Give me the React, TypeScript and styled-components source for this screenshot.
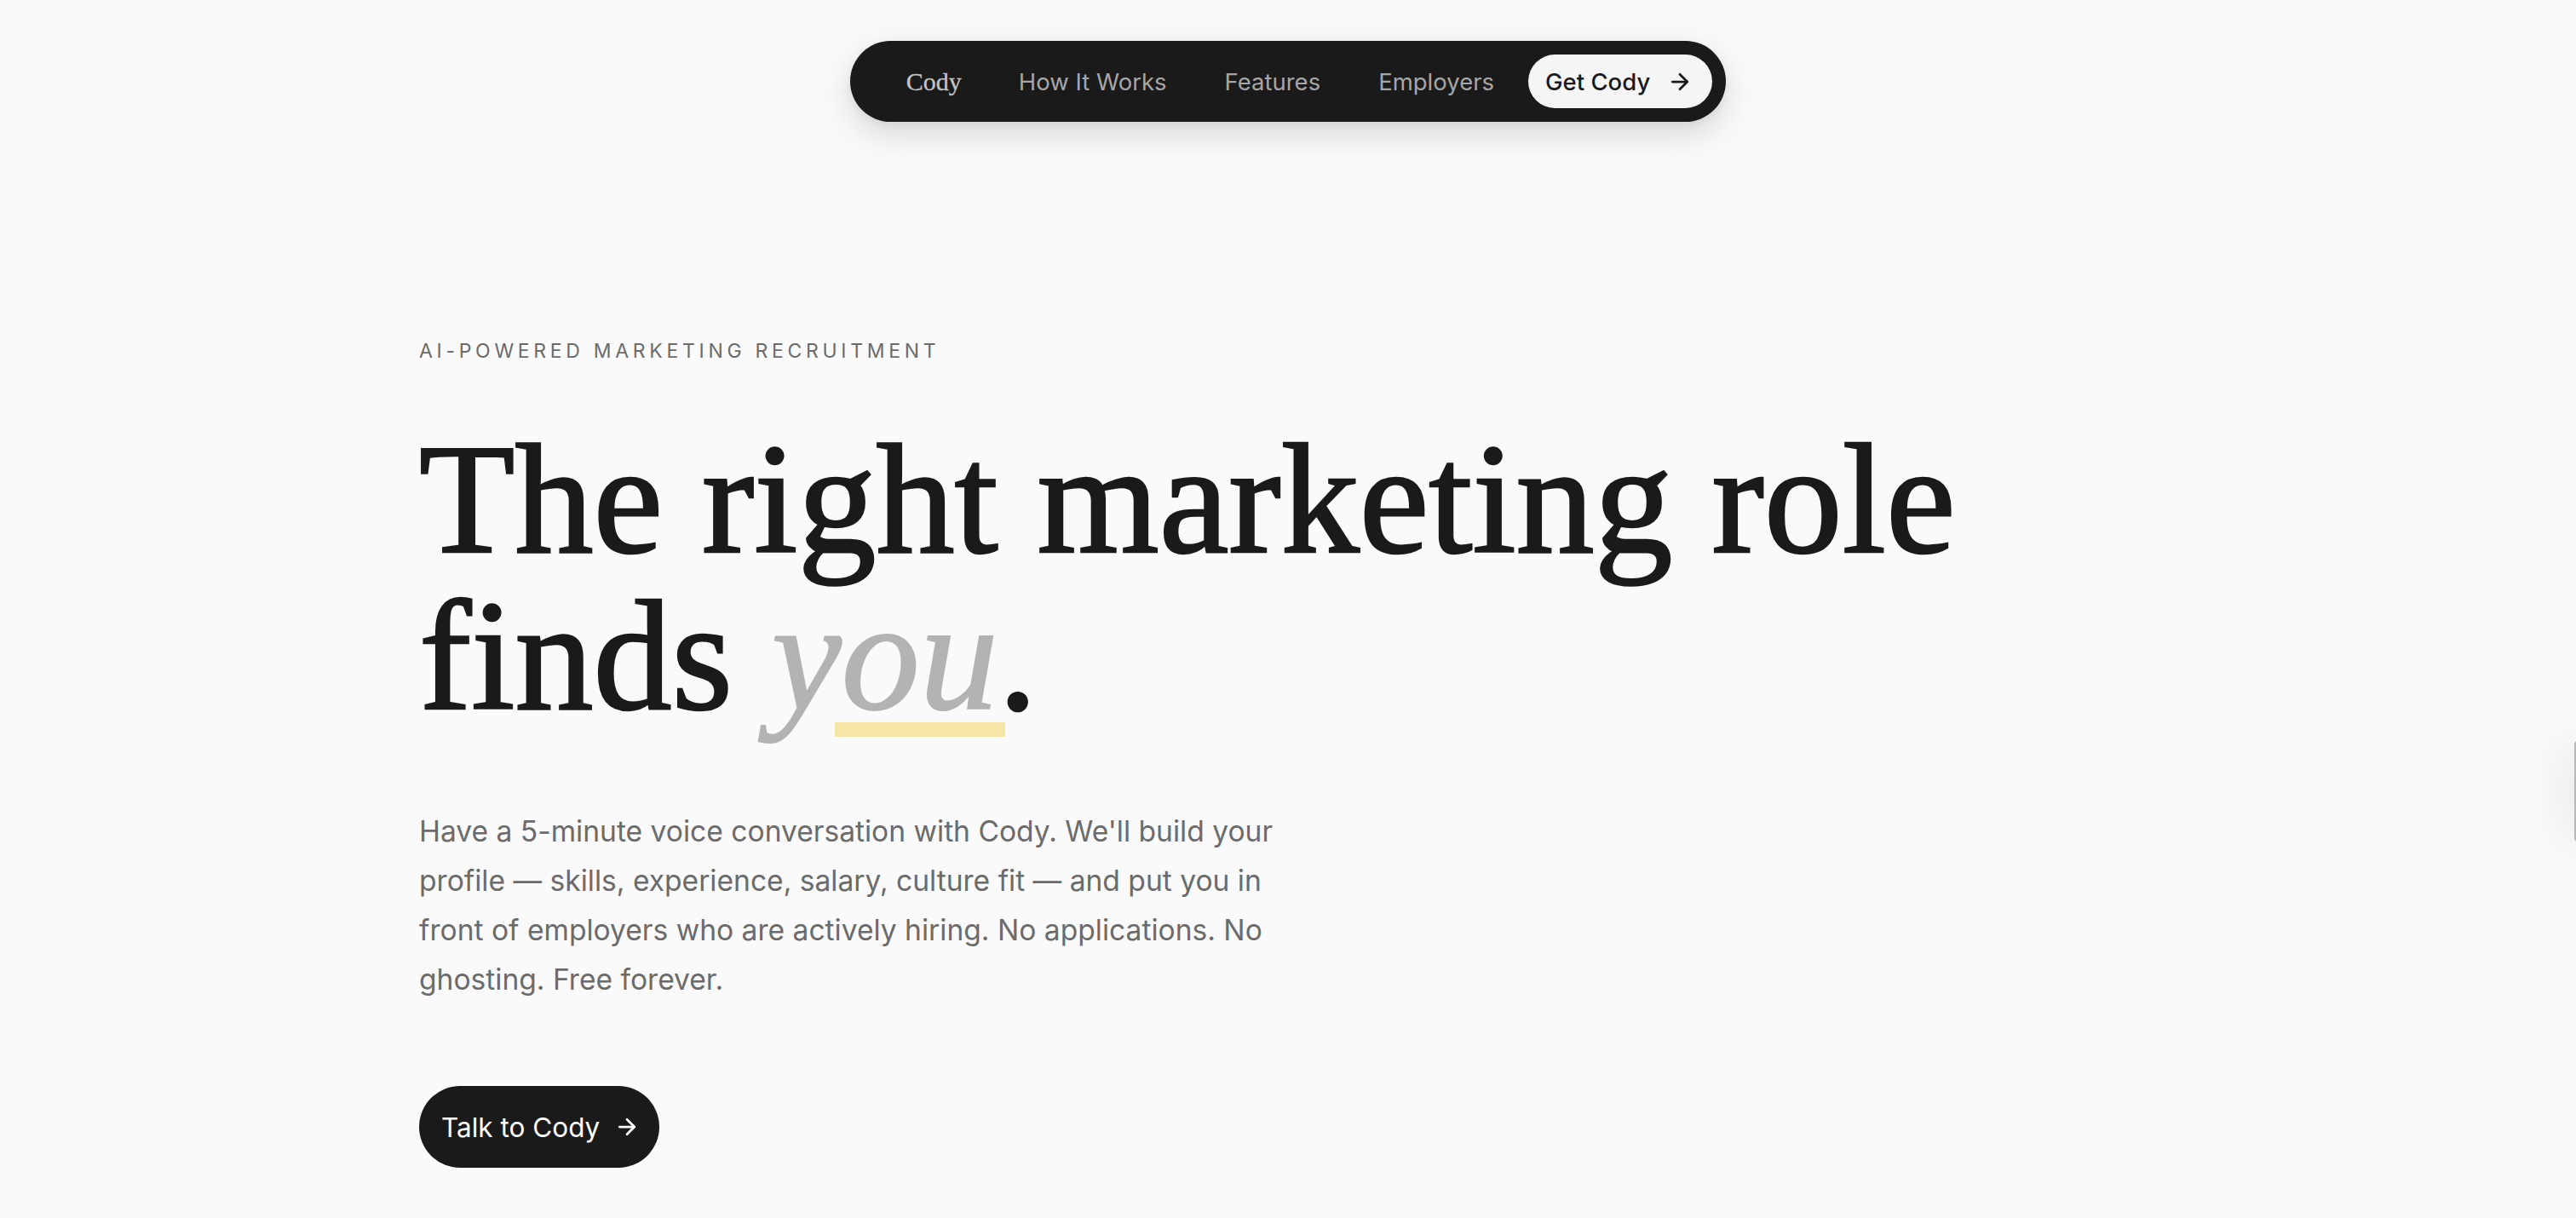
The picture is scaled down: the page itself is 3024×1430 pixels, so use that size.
import React from 'react';
import styled, { createGlobalStyle } from 'styled-components';
import { ArrowRight } from 'lucide-react';

const GlobalStyle = createGlobalStyle`
  html, body {
    margin: 0;
    padding: 0;
    background: #fafafa;
  }
  body {
    font-family: Inter, "Noto Sans", sans-serif;
    color: #1a1a1a;
    -webkit-font-smoothing: antialiased;
  }
  * {
    box-sizing: border-box;
  }
`;

function App() {
  return (
    <Page>
      <GlobalStyle />
      <NavRow>
        <NavPill>
          <Logo href="#">Cody</Logo>
          <NavLink href="#">How It Works</NavLink>
          <NavLink href="#">Features</NavLink>
          <NavLink href="#">Employers</NavLink>
          <NavButton href="#">
            Get Cody
            <ArrowRight size={30} strokeWidth={2.2} />
          </NavButton>
        </NavPill>
      </NavRow>

      <Hero>
        <Eyebrow>AI-Powered Marketing Recruitment</Eyebrow>
        <Headline>
          The right marketing role
          <br />
          finds <Soft>you</Soft>.
        </Headline>
        <Lead>
          Have a 5-minute voice conversation with Cody. We'll build your profile — skills,
          experience, salary, culture fit — and put you in front of employers who are actively
          hiring. No applications. No ghosting. Free forever.
        </Lead>
        <Cta href="#">
          Talk to Cody
          <ArrowRight size={30} strokeWidth={2.2} />
        </Cta>
      </Hero>

      <EdgeTab />
    </Page>
  );
}

const Page = styled.div`
  min-height: 1430px;
  padding-top: 48px;
  overflow: hidden;
`;

const NavRow = styled.header`
  display: flex;
  justify-content: center;
`;

const NavPill = styled.nav`
  display: flex;
  align-items: center;
  height: 95px;
  padding: 0 16px 0 33px;
  background: #1a1a1a;
  border-radius: 999px;
  box-shadow: 0 14px 40px rgba(0, 0, 0, 0.14), 0 4px 10px rgba(0, 0, 0, 0.06);
`;

const Logo = styled.a`
  padding: 0 33px;
  font-family: "Liberation Serif", "DejaVu Serif", serif;
  font-size: 30px;
  color: #c4c4c4;
  text-decoration: none;
  -webkit-text-stroke: 0.3px #c4c4c4;
`;

const NavLink = styled.a`
  padding: 0 34px;
  font-size: 27.5px;
  color: #a6a6a6;
  text-decoration: none;
`;

const NavButton = styled.a`
  display: flex;
  align-items: center;
  gap: 20px;
  height: 63px;
  margin-left: 6px;
  padding: 0 23px 0 20px;
  background: #f5f5f5;
  border-radius: 999px;
  font-size: 27.5px;
  font-weight: 500;
  color: #1a1a1a;
  text-decoration: none;
`;

const Hero = styled.main`
  max-width: 2040px;
  margin: 0 auto;
  padding-top: 258px;
`;

const Eyebrow = styled.p`
  margin: 0;
  font-size: 23px;
  line-height: 23px;
  letter-spacing: 4.7px;
  text-transform: uppercase;
  color: #6b6b6b;
`;

const Headline = styled.h1`
  margin: 70px 0 0;
  font-family: "Liberation Serif", "DejaVu Serif", serif;
  font-weight: 400;
  font-size: 184px;
  line-height: 184px;
  letter-spacing: 0;
  color: #1a1a1a;
  -webkit-text-stroke: 2.5px #1a1a1a;
`;

const Soft = styled.em`
  position: relative;
  z-index: 0;
  color: #b3b3b3;
  -webkit-text-stroke: 2px #b3b3b3;

  &::after {
    content: '';
    position: absolute;
    z-index: -1;
    left: 74px;
    width: 200px;
    bottom: 7px;
    height: 17px;
    background: #f5e6a8;
    -webkit-text-stroke: 0;
  }
`;

const Lead = styled.p`
  max-width: 1040px;
  margin: 85px 0 0;
  font-size: 33.6px;
  line-height: 58px;
  color: #6b6b6b;
`;

const Cta = styled.a`
  display: inline-flex;
  align-items: center;
  gap: 17px;
  height: 96px;
  margin-top: 96px;
  padding: 0 23px 0 26px;
  background: #1a1a1a;
  border-radius: 999px;
  font-size: 31.5px;
  color: #ffffff;
  text-decoration: none;
`;

const EdgeTab = styled.div`
  position: fixed;
  top: 870px;
  right: -80px;
  width: 82px;
  height: 118px;
  background: #f6f6f6;
  border-left: 2px solid #b8b8b8;
  border-radius: 4px;
  box-shadow: -20px 0 50px rgba(0, 0, 0, 0.05);
`;

export default App;
